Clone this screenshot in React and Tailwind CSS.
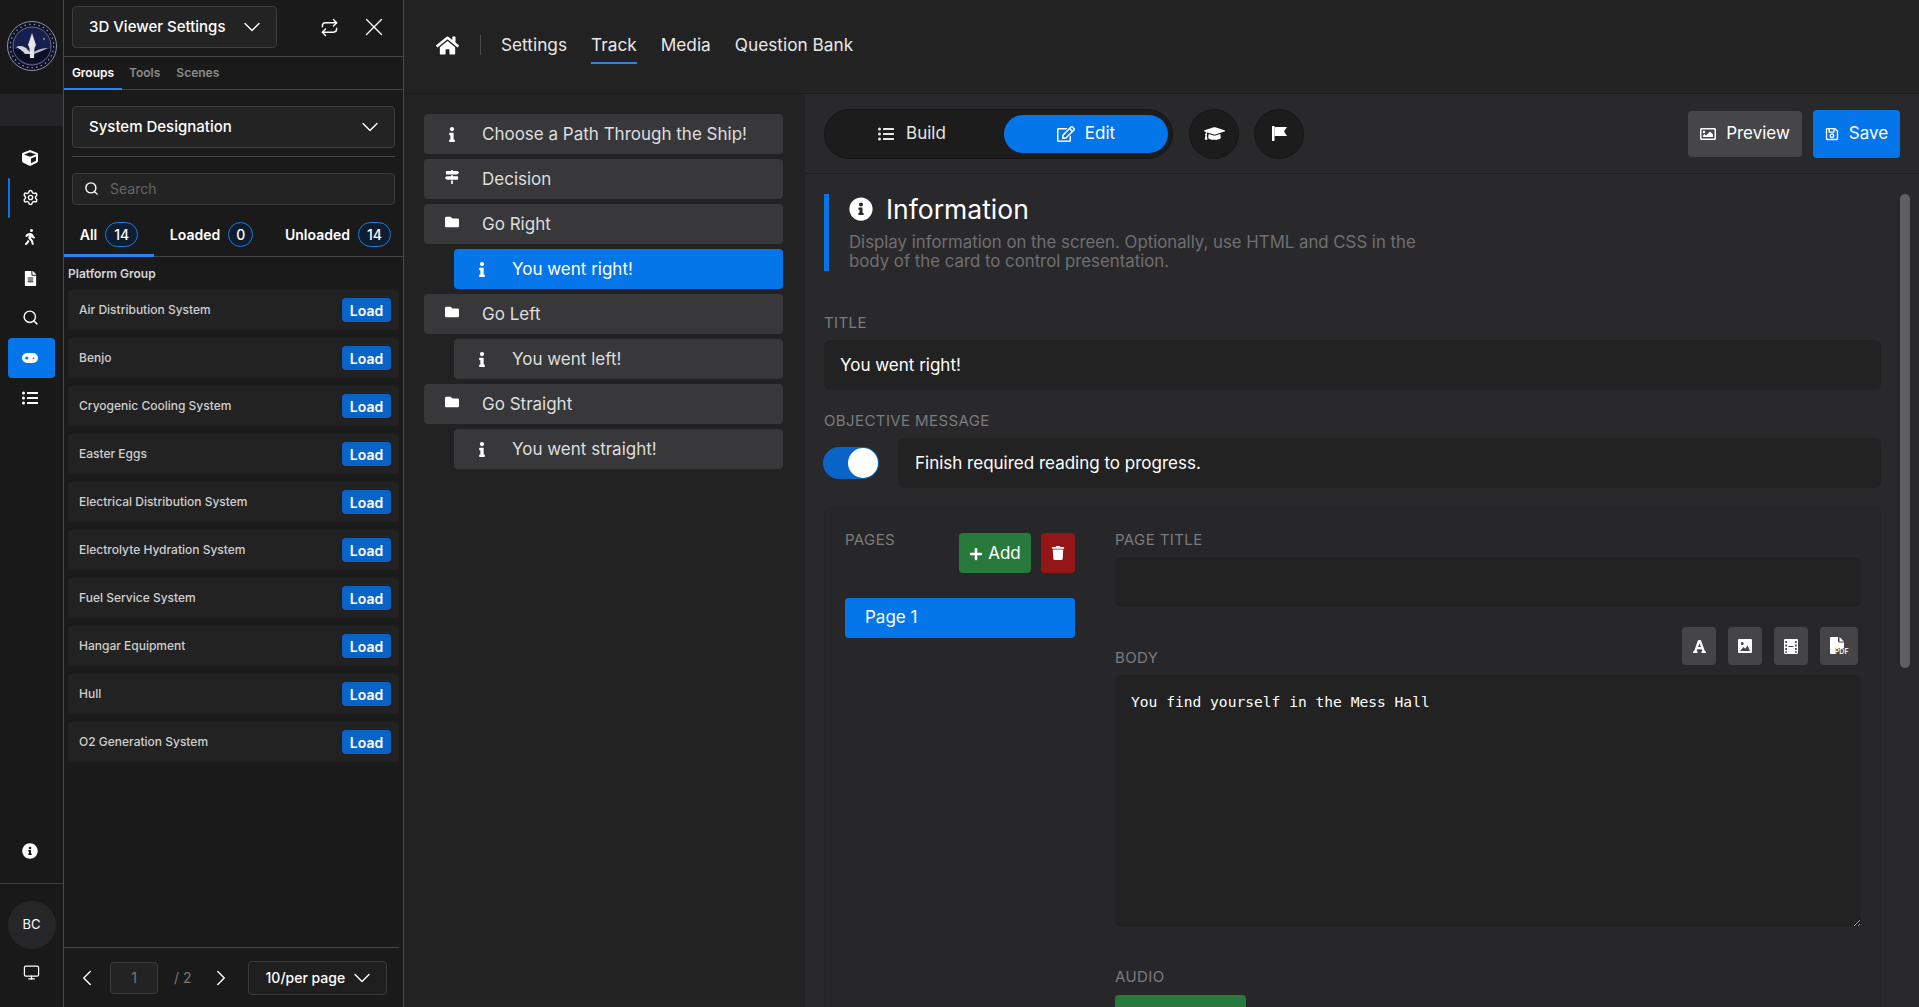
import React from 'react';
import { Settings, Search, Monitor, Repeat, X, ChevronDown, ChevronLeft, ChevronRight } from 'lucide-react';
import {
  FaCube, FaWalking, FaFileAlt, FaListUl, FaInfoCircle, FaHome, FaInfo, FaMapSigns, FaFolder,
  FaRegEdit, FaGraduationCap, FaRegImage, FaRegSave, FaFont, FaPlus, FaTrash,
} from 'react-icons/fa';

const systems = [
  'Air Distribution System',
  'Benjo',
  'Cryogenic Cooling System',
  'Easter Eggs',
  'Electrical Distribution System',
  'Electrolyte Hydration System',
  'Fuel Service System',
  'Hangar Equipment',
  'Hull',
  'O2 Generation System',
];

const trackItems = [
  { icon: 'info', label: 'Choose a Path Through the Ship!' },
  { icon: 'sign', label: 'Decision' },
  { icon: 'folder', label: 'Go Right' },
  { icon: 'info', label: 'You went right!', child: true, active: true },
  { icon: 'folder', label: 'Go Left' },
  { icon: 'info', label: 'You went left!', child: true },
  { icon: 'folder', label: 'Go Straight' },
  { icon: 'info', label: 'You went straight!', child: true },
];

const Logo = () => (
  <svg viewBox="0 0 50 50" className="w-[50px] h-[50px]">
    <circle cx="25" cy="25" r="24.5" fill="#0e1026" stroke="#8f93a8" strokeWidth="1" />
    <circle cx="25" cy="25" r="21.7" fill="none" stroke="#8a8ea6" strokeWidth="1.3" strokeDasharray="1.5 3.2" />
    <circle cx="25" cy="25" r="19" fill="#171f4e" stroke="#8d91a6" strokeWidth="0.7" />
    <path d="M6.500 28 A19 19 0 0 0 43.500 28 Z" fill="#0c0e22" />
    <path d="M25 12 L27 18 L29 24 L27.500 27 L27 37 L23 37 L22.500 27 L21 24 L23 18 Z" fill="#e4e4ea" />
    <path d="M9 26 C13 24 16 25 19 27 L23 31 L23 33 L18 33 C16 30 13 28 9 26 Z" fill="#d4d4dc" />
    <path d="M41 27 C37 29 33 31 27 33 L27 31 C31 28 36 27 41 27 Z" fill="#b4b4c0" />
    <circle cx="37" cy="18" r="1.200" fill="#77778c" />
  </svg>
);

const PadIcon = () => (
  <svg viewBox="0 0 16 10" className="w-4 h-[10px]" fill="#fff">
    <path fillRule="evenodd" d="M5 0h6a5 5 0 0 1 0 10H5A5 5 0 0 1 5 0Zm-.2 3.4a1.6 1.6 0 1 0 0 3.2 1.6 1.6 0 0 0 0-3.2Zm6.8 1a.9.9 0 1 0 0 1.8.9.9 0 0 0 0-1.8Z" />
  </svg>
);

const FlagIcon = () => (
  <svg viewBox="0 0 15 15" className="w-[15px] h-[15px]" fill="#fff">
    <path d="M0 0h2.500v15H0Z" />
    <path d="M2.500 1H15l-3 4.500L15 10H2.500Z" />
  </svg>
);

const ImageIcon = () => (
  <svg viewBox="0 0 14 14" className="w-[14px] h-[14px]" fill="#fff">
    <path fillRule="evenodd" d="M1 0h12a1 1 0 0 1 1 1v12a1 1 0 0 1-1 1H1a1 1 0 0 1-1-1V1a1 1 0 0 1 1-1Zm3.200 3a1.500 1.500 0 1 0 0 3 1.500 1.500 0 0 0 0-3ZM2 12h10l-2.500-5.500-2.300 3.200L5.500 8Z" />
  </svg>
);

const FilmIcon = () => (
  <svg viewBox="0 0 14 15" className="w-[14px] h-[15px]" fill="#fff">
    <path fillRule="evenodd" d="M1 0h12a1 1 0 0 1 1 1v13a1 1 0 0 1-1 1H1a1 1 0 0 1-1-1V1a1 1 0 0 1 1-1Zm.300 2v2h1.700V2Zm9.700 0v2h1.700V2ZM1.300 5.500v2h1.700v-2Zm9.700 0v2h1.700v-2ZM1.300 9v2h1.700V9Zm9.700 0v2h1.700V9Zm-9.700 3.200v1.500h1.700v-1.500Zm9.700 0v1.500h1.700v-1.500ZM4.500 7.100v.8h5v-.8Z" />
  </svg>
);

const RailIcon = ({ children, active, marked, lift }) => (
  <div className="relative h-10 flex items-center">
    {marked && <div className="absolute left-2 top-0 h-10 w-[2px] rounded-full bg-[#0575ea]" />}
    <div className={`ml-2 w-[47px] h-10 flex items-center justify-center rounded pr-[3px] ${active ? 'bg-[#0575ea]' : ''} ${lift ? 'pb-[2px]' : ''}`}>
      {children}
    </div>
  </div>
);

const Rail = () => (
  <div className="w-16 shrink-0 flex flex-col border-r border-[#4a4a4a] bg-[#191919]">
    <div className="h-[94px] pt-[21px] pl-[7px]">
      <Logo />
    </div>
    <div className="h-8 bg-[#242426]" />
    <div className="pt-3">
      <RailIcon><FaCube size={16} /></RailIcon>
      <RailIcon marked lift><Settings size={17} strokeWidth={2} /></RailIcon>
      <RailIcon lift><FaWalking size={16} /></RailIcon>
      <RailIcon><FaFileAlt size={15} /></RailIcon>
      <RailIcon lift><Search size={17} strokeWidth={2} /></RailIcon>
      <RailIcon active><PadIcon /></RailIcon>
      <RailIcon><FaListUl size={16} /></RailIcon>
    </div>
    <div className="mt-auto h-10 flex items-center justify-center pr-[4px] mb-3">
      <FaInfoCircle size={16} />
    </div>
    <div className="h-[124px] border-t border-[#3d3d3d] flex flex-col items-center pt-[17px]">
      <div className="w-12 h-12 rounded-full bg-[#262628] flex items-center justify-center text-[13px]">BC</div>
      <Monitor size={17} className="mt-[15px]" strokeWidth={1.75} />
    </div>
  </div>
);

const Stat = ({ label, count, active }) => (
  <div className={`h-full flex items-center justify-center gap-2 text-[14px] font-semibold ${active ? 'border-b-[3px] border-[#2b83f0] pb-1' : 'pb-[7px]'}`}>
    <span>{label}</span>
    <span className={`h-[25px] rounded-full border border-[#1d7ae0] bg-[#0e1d30] flex items-center justify-center text-[14px] font-medium ${count > 9 ? 'w-[33px]' : 'w-[25px]'}`}>{count}</span>
  </div>
);

const Sidebar = () => (
  <div className="w-[340px] shrink-0 flex flex-col border-r border-[#4a4a4a] bg-[#1a1a1a]">
    <div className="h-[57px] shrink-0 flex items-center border-b border-[#444] pl-2 pb-[2px]">
      <div className="w-[205px] h-[42px] flex items-center justify-between rounded border border-[#3c3c3c] bg-[#232323] pl-4 pr-[10px] text-[15px] font-medium">
        <span>3D Viewer Settings</span>
        <ChevronDown size={28} strokeWidth={1.2} />
      </div>
      <Repeat size={19} className="ml-[43px]" strokeWidth={1.75} />
      <X size={30} className="ml-[20px]" strokeWidth={1.1} />
    </div>
    <div className="h-[33px] shrink-0 flex border-b border-[#444] text-[12px] font-semibold">
      <div className="w-[58px] border-b-2 border-[#2b83f0] -mb-px flex items-center justify-center">Groups</div>
      <div className="ml-[7px] flex items-center text-[#8a8a8a]">Tools</div>
      <div className="ml-4 flex items-center text-[#8a8a8a]">Scenes</div>
    </div>
    <div className="px-2 pt-4">
      <div className="h-[42px] flex items-center justify-between rounded border border-[#3c3c3c] bg-[#232323] pl-4 pr-[10px] text-[15px] font-medium">
        <span>System Designation</span>
        <ChevronDown size={28} strokeWidth={1.2} />
      </div>
      <div className="mt-2 border-t border-[#4a4a4a]" />
      <div className="mt-4 h-8 flex items-center rounded border border-[#3c3c3c] bg-[#232323] pl-[11px] pb-px text-[14px] text-[#666]">
        <Search size={15} className="text-white" strokeWidth={2.25} />
        <span className="ml-[11px]">Search</span>
      </div>
    </div>
    <div className="mt-[14px] h-[38px] shrink-0 flex border-b border-[#444]">
      <div className="w-[90px] h-[38px]"><Stat label="All" count={14} active /></div>
      <div className="w-[105px] h-[37px] pl-[10px]"><Stat label="Loaded" count={0} /></div>
      <div className="w-[144px] h-[37px] pl-[14px]"><Stat label="Unloaded" count={14} /></div>
    </div>
    <div className="h-[33px] shrink-0 flex items-center pl-1 text-[12px] font-semibold text-[#d4d4d4]">Platform Group</div>
    <div className="flex flex-col gap-2 px-1">
      {systems.map((name) => (
        <div key={name} className="h-10 flex items-center justify-between rounded-sm bg-[#222222] pl-[11px] pr-2">
          <span className="text-[12px] font-medium text-[#cfcfcf]">{name}</span>
          <span className="w-[49px] h-6 flex items-center justify-center rounded bg-[#0a64c8] text-[14px] font-semibold">Load</span>
        </div>
      ))}
    </div>
    <div className="mt-auto mr-1 h-[60px] shrink-0 border-t border-[#444] flex items-center pl-[10px]">
      <ChevronLeft size={26} strokeWidth={1.3} />
      <div className="ml-[10px] w-12 h-8 flex items-center justify-center rounded border border-[#3a3a3a] bg-[#232323] text-[14px] text-[#777]">1</div>
      <span className="ml-4 text-[14px] text-[#777]">/ 2</span>
      <ChevronRight size={26} strokeWidth={1.3} className="ml-4" />
      <div className="ml-[14px] w-[139px] h-[34px] flex items-center justify-between rounded border border-[#3a3a3a] bg-[#1f1f1f] pl-[17px] pr-[10px] text-[14px] font-medium">
        <span>10/per page</span>
        <ChevronDown size={28} strokeWidth={1.2} />
      </div>
    </div>
  </div>
);

const TopBar = () => (
  <div className="h-[94px] shrink-0 flex items-center border-b border-[#1a1a1a] bg-[#222222] pl-8 pb-[3px] text-[17.25px] text-[#e8e8e8]">
    <FaHome size={23} className="text-white" />
    <div className="ml-[21px] w-px h-5 bg-[#4a4a4a]" />
    <span className="ml-5">Settings</span>
    <span className="relative ml-6 text-[#e8e8e8]">
      Track
      <span className="absolute left-0 right-0 -bottom-[6px] h-[2px] bg-[#2b83f0]" />
    </span>
    <span className="ml-6">Media</span>
    <span className="ml-6">Question Bank</span>
  </div>
);

const trackIcon = (name) => {
  if (name === 'sign') return <FaMapSigns size={14} className="-mt-1" />;
  if (name === 'folder') return <FaFolder size={14} className="-mt-1" />;
  return <FaInfo size={15} />;
};

const TrackPanel = () => (
  <div className="w-[401px] shrink-0 flex flex-col gap-[5px] bg-[#222222] pt-5 pl-5 pr-[22px]">
    {trackItems.map((item) => (
      <div
        key={item.label}
        className={`h-10 flex items-center rounded pl-[21px] text-[17px] ${item.child ? 'ml-[30px]' : ''} ${item.active ? 'bg-[#0575ea] text-white' : 'bg-[#38383a] text-[#dedede]'}`}
      >
        <span className="w-[14px] flex justify-center text-white">{trackIcon(item.icon)}</span>
        <span className="ml-[23px] pt-px">{item.label}</span>
      </div>
    ))}
  </div>
);

const Toolbar = () => (
  <div className="h-[80px] shrink-0 flex items-center border-b border-[#1f1f1f] pl-[19px] pr-[19px]">
    <div className="w-[349px] h-[50px] flex items-center rounded-full border border-[#161616] bg-[#1c1c1c] pl-[7px] pr-[4px] text-[17px]">
      <div className="flex-1 flex items-center justify-center gap-3 pr-3 text-[#e6e6e6]">
        <FaListUl size={16} />
        <span>Build</span>
      </div>
      <div className="w-[164px] h-[38px] rounded-full bg-[#0575ea] flex items-center justify-center gap-[10px]">
        <FaRegEdit size={18} />
        <span>Edit</span>
      </div>
    </div>
    <div className="ml-4 w-[50px] h-[50px] rounded-full border border-[#161616] bg-[#1c1c1c] flex items-center justify-center">
      <FaGraduationCap size={21} />
    </div>
    <div className="ml-[15px] w-[50px] h-[50px] rounded-full border border-[#161616] bg-[#1c1c1c] flex items-center justify-center">
      <FlagIcon />
    </div>
    <div className="ml-auto w-[114px] h-[46px] flex items-center justify-center gap-[10px] rounded bg-[#464648] text-[17px]">
      <FaRegImage size={16} />
      <span>Preview</span>
    </div>
    <div className="ml-[11px] w-[87px] h-12 flex items-center justify-center gap-[10px] rounded bg-[#0575ea] text-[17px]">
      <FaRegSave size={14} />
      <span>Save</span>
    </div>
  </div>
);

const FieldLabel = ({ children, className = '' }) => (
  <div className={`h-5 flex items-center pt-px text-[15px] tracking-[0.4px] uppercase text-[#7b7b7d] ${className}`}>{children}</div>
);

const MediaButton = ({ children, wide }) => (
  <div className={`h-[38px] flex items-center justify-center rounded bg-[#454547] ${wide ? 'w-[38px]' : 'w-[34px]'}`}>
    {children}
  </div>
);

const PdfIcon = () => (
  <div className="relative w-[19px] h-[18px]">
    <svg viewBox="0 0 14 18" className="w-[14px] h-[18px]" fill="#fff">
      <path d="M1 0h7v4a1.5 1.5 0 0 0 1.5 1.5H14V11H5v6H1a1 1 0 0 1-1-1V1a1 1 0 0 1 1-1Zm8.5 0L14 4.5H9.500Z" />
    </svg>
    <span className="absolute right-0 bottom-0 text-[7px] font-semibold leading-none">PDF</span>
  </div>
);

const EditPanel = () => (
  <div className="relative flex-1 min-w-0 flex flex-col overflow-hidden bg-[#29292b]">
    <Toolbar />
    <div className="flex-1 overflow-hidden pt-5 pl-[19px] pr-[38px]">
      <div className="h-[77px] border-l-[5px] border-[#0575ea] pl-5">
        <div className="flex items-center h-[30px]">
          <FaInfoCircle size={24} />
          <span className="ml-[13px] text-[26.5px] leading-none">Information</span>
        </div>
        <p className="mt-[9px] w-[590px] text-[16.8px] leading-[19px] text-[#6f6f71]">
          Display information on the screen. Optionally, use HTML and CSS in the body of the card to control presentation.
        </p>
      </div>
      <FieldLabel className="mt-[42px] mb-[7px]">Title</FieldLabel>
      <div className="h-[50px] flex items-center rounded-md bg-[#222222] pl-4 pt-px text-[17px]">You went right!</div>
      <FieldLabel className="mt-[21px] mb-[7px]">Objective Message</FieldLabel>
      <div className="flex items-center h-[50px]">
        <div className="-ml-px w-14 h-8 flex items-center justify-end rounded-full bg-[#0a64c8] pr-px">
          <div className="w-[30px] h-[30px] rounded-full bg-white" />
        </div>
        <div className="ml-[19px] flex-1 h-[50px] flex items-center rounded-md bg-[#222222] pl-[17px] pt-px text-[17px]">
          Finish required reading to progress.
        </div>
      </div>
      <div className="mt-[19px] flex rounded-md border border-[#252527] bg-[#272729] pt-[22px] pl-5 pr-[19px] pb-10">
        <div className="w-[230px] shrink-0">
          <div className="flex items-start">
            <FieldLabel>Pages</FieldLabel>
            <div className="ml-auto mt-[3px] w-[72px] h-10 flex items-center justify-center gap-[5px] rounded bg-[#277a3b] pt-px text-[17px]">
              <FaPlus size={14} />
              <span>Add</span>
            </div>
            <div className="ml-[10px] mt-[3px] w-[34px] h-10 flex items-center justify-center rounded bg-[#941616]">
              <FaTrash size={14} />
            </div>
          </div>
          <div className="mt-[25px] h-10 flex items-center rounded bg-[#0575ea] pl-5 pb-px text-[17px]">Page 1</div>
        </div>
        <div className="ml-10 flex-1 min-w-0">
          <FieldLabel className="mb-[7px]">Page Title</FieldLabel>
          <div className="h-[50px] rounded-md bg-[#222222]" />
          <div className="mt-5 flex items-start justify-between pr-[3px] mb-[7px]">
            <FieldLabel className="mt-[21px]">Body</FieldLabel>
            <div className="flex gap-3">
              <MediaButton><FaFont size={15} /></MediaButton>
              <MediaButton><ImageIcon /></MediaButton>
              <MediaButton><FilmIcon /></MediaButton>
              <MediaButton wide><PdfIcon /></MediaButton>
            </div>
          </div>
          <textarea
            readOnly
            defaultValue="You find yourself in the Mess Hall"
            className="block w-full h-[252px] rounded-md bg-[#222222] pl-4 pt-[17px] text-[14.6px] leading-[20px] text-white outline-none font-['DejaVu_Sans_Mono',monospace]"
          />
          <FieldLabel className="mt-10">Audio</FieldLabel>
          <div className="mt-2 w-[131px] h-[50px] rounded bg-[#277a3b]" />
        </div>
      </div>
    </div>
    <div className="absolute right-[9px] top-[100px] w-[10px] h-[474px] rounded-full bg-[#5f6063]" />
  </div>
);

export default function App() {
  return (
    <div className="flex h-screen w-full overflow-hidden bg-[#1a1a1a] text-white font-['Inter',sans-serif]">
      <Rail />
      <Sidebar />
      <div className="flex-1 min-w-0 flex flex-col">
        <TopBar />
        <div className="flex-1 min-h-0 flex">
          <TrackPanel />
          <EditPanel />
        </div>
      </div>
    </div>
  );
}
